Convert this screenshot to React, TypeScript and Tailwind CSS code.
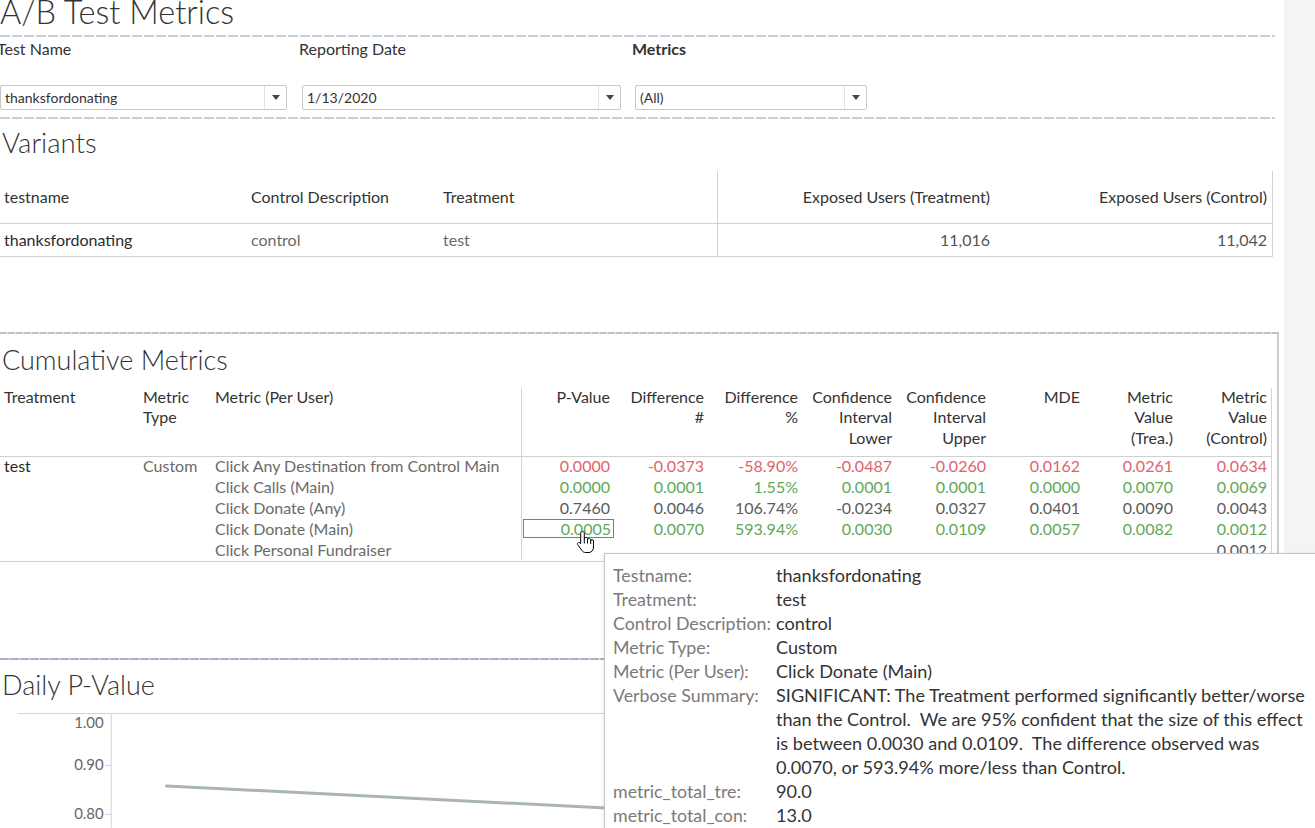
import React from 'react'

const TONE: Record<string, string> = {
  red: 'text-[#e0636b]',
  green: 'text-[#5fa85a]',
  gray: 'text-[#5c5c5c]',
}

const metricRows = [
  { name: 'Click Any Destination from Control Main', tone: 'red', vals: ['0.0000', '-0.0373', '-58.90%', '-0.0487', '-0.0260', '0.0162', '0.0261', '0.0634'] },
  { name: 'Click Calls (Main)', tone: 'green', vals: ['0.0000', '0.0001', '1.55%', '0.0001', '0.0001', '0.0000', '0.0070', '0.0069'] },
  { name: 'Click Donate (Any)', tone: 'gray', vals: ['0.7460', '0.0046', '106.74%', '-0.0234', '0.0327', '0.0401', '0.0090', '0.0043'] },
  { name: 'Click Donate (Main)', tone: 'green', vals: ['0.0005', '0.0070', '593.94%', '0.0030', '0.0109', '0.0057', '0.0082', '0.0012'], hover: true },
  { name: 'Click Personal Fundraiser', tone: 'gray', vals: ['', '', '', '', '', '', '', '0.0012'] },
]

const numHeaders: React.ReactNode[] = [
  'P-Value',
  <>Difference<br />#</>,
  <>Difference<br />%</>,
  <>Confidence<br />Interval<br />Lower</>,
  <>Confidence<br />Interval<br />Upper</>,
  'MDE',
  <>Metric<br />Value<br />(Trea.)</>,
  <>Metric<br />Value<br />(Control)</>,
]

const GRID = 'grid grid-cols-[143px_72px_306px_93px_94px_94px_94px_94px_94px_93px_94px]'

function Dropdown({ value, width }: { value: string; width: string }) {
  return (
    <div className={`flex h-[25px] items-stretch rounded-[2px] border border-[#c8c8c8] bg-white ${width}`}>
      <div className="flex flex-1 items-center pl-[4px] text-[14px] text-[#333]">{value}</div>
      <div className="flex w-[22px] items-center justify-center border-l border-[#e2e2e2]">
        <svg width="8" height="5" viewBox="0 0 8 5">
          <path d="M0 0h8L4 5z" fill="#444" />
        </svg>
      </div>
    </div>
  )
}

function HandCursor() {
  return (
    <svg width="19" height="26" viewBox="0 0 19 26" className="absolute left-[576px] top-[530px]">
      <path
        d="M6.5 1.5c1 0 1.8.8 1.8 1.8V9c0-.9.7-1.5 1.6-1.5s1.6.6 1.6 1.5v1c0-.9.7-1.5 1.6-1.5s1.6.6 1.6 1.5v1c0-.8.6-1.3 1.4-1.3s1.4.5 1.4 1.3v6c0 3-1.8 5.5-4.5 5.5H9.5c-1.8 0-2.8-.8-3.8-2.3L1.8 14.8c-.6-.8-.4-1.7.3-2.1.7-.4 1.6-.2 2.2.6l.4.5V3.3c0-1 .8-1.8 1.8-1.8z"
        fill="#fff"
        stroke="#000"
        strokeWidth="1"
        strokeLinejoin="round"
      />
      <path d="M8.3 9v4.5M11.5 10v3.5M14.7 11v3" stroke="#000" strokeWidth="1" />
    </svg>
  )
}

function Tooltip() {
  const rows: [string, React.ReactNode][] = [
    ['Testname:', 'thanksfordonating'],
    ['Treatment:', 'test'],
    ['Control Description:', 'control'],
    ['Metric Type:', 'Custom'],
    ['Metric (Per User):', 'Click Donate (Main)'],
    [
      'Verbose Summary:',
      <span className="whitespace-pre">
        {'SIGNIFICANT: The Treatment performed significantly better/worse\nthan the Control.  We are 95% confident that the size of this effect\nis between 0.0030 and 0.0109.  The difference observed was\n0.0070, or 593.94% more/less than Control.'}
      </span>,
    ],
    ['metric_total_tre:', '90.0'],
    ['metric_total_con:', '13.0'],
  ]
  return (
    <div className="absolute left-[604px] top-[553px] h-[300px] w-[730px] border border-[#c6c6c6] bg-white pl-[8px] pt-[9px] text-[17.8px] leading-[24px] shadow-[0_1px_4px_rgba(0,0,0,0.12)]">
      {rows.map(([k, v]) => (
        <div key={k} className="flex">
          <div className="w-[163px] shrink-0 whitespace-nowrap text-[#7a7a7a]">{k}</div>
          <div className="text-[18.1px] text-[#333]">{v}</div>
        </div>
      ))}
    </div>
  )
}

export default function App() {
  return (
    <div className="relative flex h-[828px] w-[1315px] overflow-hidden bg-white font-['Lato',sans-serif] text-[#333]">
      <div className="flex w-[1284px] shrink-0 flex-col">
        {/* Title */}
        <div className="h-[35px]">
          <div className="-mt-[4px] text-[32.5px] font-light leading-none text-[#333]">A/B Test Metrics</div>
        </div>
        <div className="h-[2px] w-[1275px] bg-[repeating-linear-gradient(90deg,#c6cfe0_0_10px,transparent_10px_12px)]" />

        {/* Filters */}
        <div className="flex h-[80px] pt-[2px] text-[16px]">
          <div className="flex w-[299px] flex-col">
            <div className="-ml-[3px] h-[20px] leading-[20px]">Test Name</div>
            <div className="mt-[26px]">
              <Dropdown value="thanksfordonating" width="w-[287px]" />
            </div>
          </div>
          <div className="flex w-[333px] flex-col">
            <div className="h-[20px] leading-[20px]">Reporting Date</div>
            <div className="ml-[3px] mt-[26px]">
              <Dropdown value="1/13/2020" width="w-[319px]" />
            </div>
          </div>
          <div className="flex w-[250px] flex-col">
            <div className="h-[20px] font-bold leading-[20px]">Metrics</div>
            <div className="ml-[3px] mt-[26px]">
              <Dropdown value="(All)" width="w-[232px]" />
            </div>
          </div>
        </div>
        <div className="h-[2px] w-[1275px] bg-[repeating-linear-gradient(90deg,#c6cfe0_0_10px,transparent_10px_12px)]" />

        {/* Variants */}
        <div className="h-[52px] pl-[2px] pt-[9px]">
          <div className="text-[27.5px] font-light leading-[30px]">Variants</div>
        </div>
        <div className="w-[1273px] border-r border-[#d4d4d4] text-[16px]">
          <div className="grid h-[53px] grid-cols-[251px_192px_274px_277px_278px] items-center border-b border-[#d0d0d0]">
            <div className="pl-[4px]">testname</div>
            <div>Control Description</div>
            <div>Treatment</div>
            <div className="flex h-full items-center justify-end border-l border-[#d4d4d4] pr-[4px]">Exposed Users (Treatment)</div>
            <div className="pr-[5px] text-right">Exposed Users (Control)</div>
          </div>
          <div className="grid h-[33px] grid-cols-[251px_192px_274px_277px_278px] items-center border-b border-[#d0d0d0]">
            <div className="pl-[4px] text-[#2b2b2b]">thanksfordonating</div>
            <div className="text-[#6a6a6a]">control</div>
            <div className="text-[#6a6a6a]">test</div>
            <div className="flex h-full items-center justify-end border-l border-[#d4d4d4] pr-[4px] text-[#555]">11,016</div>
            <div className="pr-[5px] text-right text-[#555]">11,042</div>
          </div>
        </div>

        <div className="h-[75px]" />

        {/* Cumulative Metrics */}
        <div className="h-[325px] w-[1279px] border-r-2 border-[#cacaca]">
          <div className="h-[2px] bg-[repeating-linear-gradient(90deg,#bcc4d1_0_7px,#e3e7ee_7px_8px)]" />
          <div className="h-[54px] pl-[2px] pt-[11px]">
            <div className="text-[27px] font-light leading-[30px]">Cumulative Metrics</div>
          </div>
          <div className="w-[1272px] border-r border-[#d4d4d4] text-[16px] leading-[20.5px]">
            <div className={`${GRID} h-[69px] border-b border-[#d0d0d0]`}>
              <div className="-mt-[1px] pl-[4px]">Treatment</div>
              <div className="-mt-[1px]">
                Metric
                <br />
                Type
              </div>
              <div className="-mt-[1px]">Metric (Per User)</div>
              {numHeaders.map((h, i) => (
                <div key={i} className={`pr-[4px] text-right ${i === 0 ? 'border-l border-[#d4d4d4]' : ''}`}>
                  <div className="-mt-[1px]">{h}</div>
                </div>
              ))}
            </div>
            <div className="h-[105px] overflow-hidden border-b border-[#d0d0d0] leading-[21px]">
              <div className="-mt-[2px]">
                {metricRows.map((r, ri) => (
                  <div key={r.name} className={`${GRID} h-[21px]`}>
                    <div className="pl-[4px] text-[#2b2b2b]">{ri === 0 ? 'test' : ''}</div>
                    <div className="text-[#6a6a6a]">{ri === 0 ? 'Custom' : ''}</div>
                    <div className="whitespace-nowrap text-[#6a6a6a]">{r.name}</div>
                    {r.vals.map((v, i) => (
                      <div key={i} className={`${TONE[r.tone]} ${i === 0 ? 'border-l border-[#d4d4d4]' : 'pr-[4px] text-right'}`}>
                        {i === 0 ? (
                          r.hover ? (
                            <div className="ml-[1px] mt-[1px] h-[19px] w-[91px] border border-[#4f9f4a] pr-[2px] text-right leading-[17px]">{v}</div>
                          ) : (
                            <div className="pr-[4px] text-right">{v}</div>
                          )
                        ) : (
                          v
                        )}
                      </div>
                    ))}
                  </div>
                ))}
              </div>
            </div>
          </div>
        </div>

        <div className="h-[2px]" />

        {/* Daily P-Value */}
        <div className="h-[2px] bg-[repeating-linear-gradient(90deg,#a8b2c3_0_9px,#dde1e8_9px_10px)]" />
        <div className="h-[53px] pl-[2px] pt-[10px]">
          <div className="text-[27px] font-light leading-[30px]">Daily P-Value</div>
        </div>
        <svg width="1284" height="115" viewBox="0 0 1284 115" className="block">
          <line x1="17" y1="0.5" x2="1284" y2="0.5" stroke="#d4d4d4" />
          <line x1="110.5" y1="0" x2="110.5" y2="115" stroke="#d4d4d4" />
          <line x1="104" y1="52.5" x2="110" y2="52.5" stroke="#d4d4d4" />
          <line x1="104" y1="101.5" x2="110" y2="101.5" stroke="#d4d4d4" />
          <g fill="#666" fontSize="15" textAnchor="end" fontFamily="Lato, sans-serif">
            <text x="103" y="15">1.00</text>
            <text x="103" y="57">0.90</text>
            <text x="103" y="106">0.80</text>
          </g>
          <line x1="166" y1="73" x2="900" y2="110" stroke="#a9b6b0" strokeWidth="3" strokeLinecap="round" />
        </svg>
      </div>
      <div className="flex-1 bg-[#f4f4f4]" />

      <HandCursor />
      <Tooltip />
    </div>
  )
}
